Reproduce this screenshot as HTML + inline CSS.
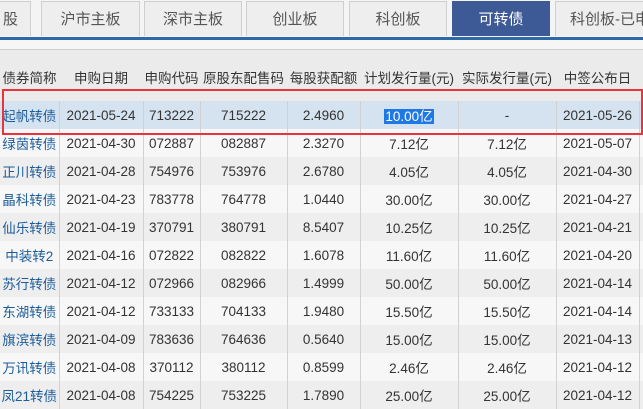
<!DOCTYPE html><html><head><meta charset="utf-8"><style>
body{margin:0;width:643px;height:408px;overflow:hidden;background:#f4f4f4;font-family:"Liberation Sans","Noto Sans CJK SC",sans-serif;position:relative}
.tab{position:absolute;top:1px;height:35px;background:#eeeeee;border:1px solid #cfcfcf;border-bottom:none;box-sizing:border-box;text-align:center;line-height:35px;font-size:15px;color:#555}
.tab.on{background:#3d5a96;color:#fff;border-color:#3d5a96}
.bl{position:absolute;top:37px;left:0;width:643px;height:3px;background:#2b6aa6}
.strip{position:absolute;top:40px;left:0;width:643px;height:9px;background:#f6f6f6;border-bottom:1px solid #cfcfcf}
.hd{position:absolute;top:50px;left:0;width:643px;height:51px;background:#ebebeb}
table{position:absolute;top:62px;left:0;border-collapse:collapse;font-size:13.5px;color:#333;table-layout:fixed}
td{height:28px;padding:0;text-align:center;white-space:nowrap;border-right:1px solid #d2d2d2;box-sizing:border-box;overflow:visible}
tr.h td{border-right:none;height:30px}
tr.gap td{height:9px;border-right:none}
tr.r1 td{background:#d5e3f0}
tr.a td{background:#f7f7f7}tr.b td{background:#eeeeee}
td.n{color:#1d5c9a}
.sel{background:#1e78e6;color:#fff;padding:0 1px}
.red{position:absolute;left:2px;top:89px;width:637px;height:42px;border:2px solid #e8343a}
</style></head><body>
<div class="tab" style="left:-10px;width:41px">股</div>
<div class="tab" style="left:41px;width:99px">沪市主板</div>
<div class="tab" style="left:144px;width:98px">深市主板</div>
<div class="tab" style="left:246px;width:98px">创业板</div>
<div class="tab" style="left:349px;width:98px">科创板</div>
<div class="tab on" style="left:452px;width:98px">可转债</div>
<div class="tab" style="left:555px;width:100px;text-align:left;padding-left:14px">科创板-已申</div>
<div class="bl"></div><div class="strip"></div><div class="hd"></div>
<table style="width:643px">
<colgroup><col style="width:59px"><col style="width:84px"><col style="width:57px"><col style="width:87px"><col style="width:73px"><col style="width:98px"><col style="width:98px"><col style="width:83px"><col style="width:4px"></colgroup>
<tr class="h"><td>债券简称</td><td>申购日期</td><td>申购代码</td><td>原股东配售码</td><td>每股获配额</td><td>计划发行量(元)</td><td>实际发行量(元)</td><td>中签公布日</td><td></td></tr>
<tr class="gap"><td></td><td></td><td></td><td></td><td></td><td></td><td></td><td></td><td></td></tr>
<tr class="r1"><td class="n">起帆转债</td><td>2021-05-24</td><td>713222</td><td>715222</td><td>2.4960</td><td><span class="sel">10.00亿</span></td><td>-</td><td>2021-05-26</td><td></td></tr>
<tr class="a"><td class="n">绿茵转债</td><td>2021-04-30</td><td>072887</td><td>082887</td><td>2.3270</td><td>7.12亿</td><td>7.12亿</td><td>2021-05-07</td><td></td></tr>
<tr class="b"><td class="n">正川转债</td><td>2021-04-28</td><td>754976</td><td>753976</td><td>2.6780</td><td>4.05亿</td><td>4.05亿</td><td>2021-04-30</td><td></td></tr>
<tr class="a"><td class="n">晶科转债</td><td>2021-04-23</td><td>783778</td><td>764778</td><td>1.0440</td><td>30.00亿</td><td>30.00亿</td><td>2021-04-27</td><td></td></tr>
<tr class="b"><td class="n">仙乐转债</td><td>2021-04-19</td><td>370791</td><td>380791</td><td>8.5407</td><td>10.25亿</td><td>10.25亿</td><td>2021-04-21</td><td></td></tr>
<tr class="a"><td class="n">中装转2</td><td>2021-04-16</td><td>072822</td><td>082822</td><td>1.6078</td><td>11.60亿</td><td>11.60亿</td><td>2021-04-20</td><td></td></tr>
<tr class="b"><td class="n">苏行转债</td><td>2021-04-12</td><td>072966</td><td>082966</td><td>1.4999</td><td>50.00亿</td><td>50.00亿</td><td>2021-04-14</td><td></td></tr>
<tr class="a"><td class="n">东湖转债</td><td>2021-04-12</td><td>733133</td><td>704133</td><td>1.9480</td><td>15.50亿</td><td>15.50亿</td><td>2021-04-14</td><td></td></tr>
<tr class="b"><td class="n">旗滨转债</td><td>2021-04-09</td><td>783636</td><td>764636</td><td>0.5640</td><td>15.00亿</td><td>15.00亿</td><td>2021-04-13</td><td></td></tr>
<tr class="a"><td class="n">万讯转债</td><td>2021-04-08</td><td>370112</td><td>380112</td><td>0.8599</td><td>2.46亿</td><td>2.46亿</td><td>2021-04-12</td><td></td></tr>
<tr class="b"><td class="n">凤21转债</td><td>2021-04-08</td><td>754225</td><td>753225</td><td>1.7890</td><td>25.00亿</td><td>25.00亿</td><td>2021-04-12</td><td></td></tr>
</table>
<div class="red"></div>
</body></html>
